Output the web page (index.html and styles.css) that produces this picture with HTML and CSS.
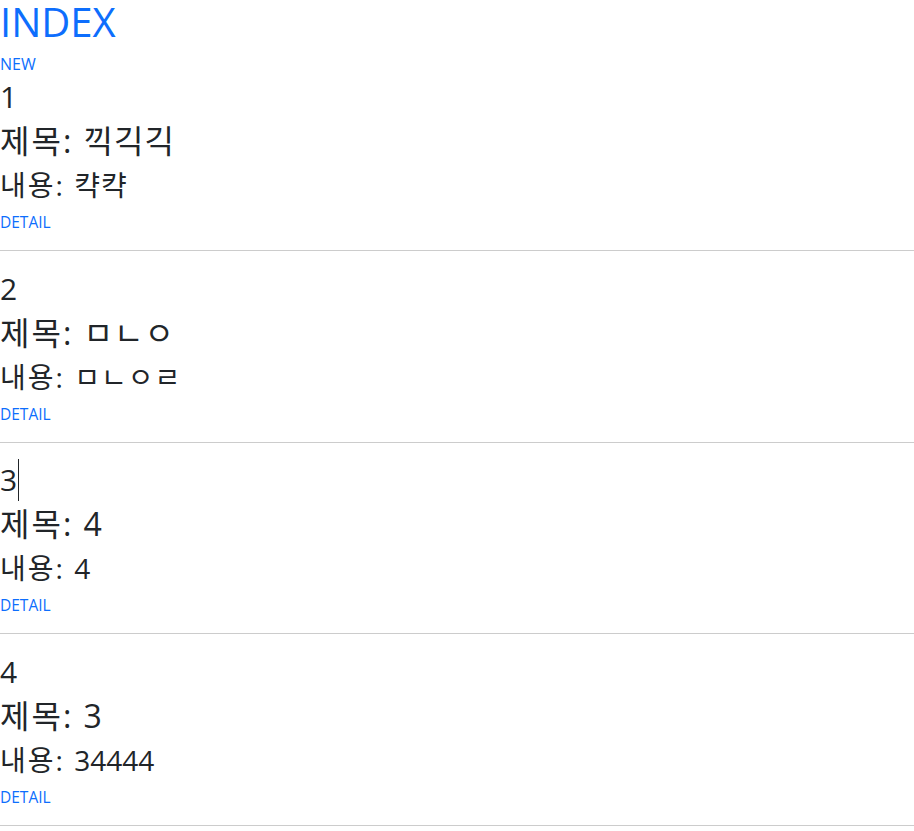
FILE: index.html
```html
<!DOCTYPE html>
<html lang="ko">
<head>
<meta charset="utf-8">
<title>INDEX</title>
<link rel="stylesheet" href="styles.css">
</head>
<body>
<h1 class="title"><a href="#">INDEX</a></h1>
<a class="small-link new-link" href="#">NEW</a>
<div class="list">
  <div class="item">
    <div class="num">1</div>
    <div class="subject"><span class="lbl">제목:</span> <span class="val">끽긱긱</span></div>
    <div class="content"><span class="lbl">내용:</span> <span class="val">캭캭</span></div>
    <a class="small-link" href="#">DETAIL</a>
  </div>
  <div class="item">
    <div class="num">2</div>
    <div class="subject"><span class="lbl">제목:</span> <span class="val">ㅁㄴㅇ</span></div>
    <div class="content"><span class="lbl">내용:</span> <span class="val">ㅁㄴㅇㄹ</span></div>
    <a class="small-link" href="#">DETAIL</a>
  </div>
  <div class="item">
    <div class="num">3<span class="caret"></span></div>
    <div class="subject"><span class="lbl">제목:</span> 4</div>
    <div class="content"><span class="lbl">내용:</span> 4</div>
    <a class="small-link" href="#">DETAIL</a>
  </div>
  <div class="item">
    <div class="num">4</div>
    <div class="subject"><span class="lbl">제목:</span> 3</div>
    <div class="content"><span class="lbl">내용:</span> 34444</div>
    <a class="small-link" href="#">DETAIL</a>
  </div>
</div>
</body>
</html>
```

FILE: styles.css
```css
html, body {
  margin: 0;
  padding: 0;
  background: #fff;
}
body {
  font-family: "Open Sans", "Noto Sans CJK KR", sans-serif;
  color: #212529;
}
a {
  color: #0d6efd;
  text-decoration: none;
}
.title {
  margin: 0;
  font-size: 40px;
  font-weight: 400;
  line-height: 44px;
}
.small-link {
  display: block;
  font-size: 15.5px;
  line-height: 20px;
}
.new-link {
  margin-top: 10px;
  font-size: 16px;
}
.item {
  display: flex;
  flex-direction: column;
  align-items: flex-start;
  border-bottom: 1px solid #cccccc;
  padding-bottom: 11px;
  margin-bottom: 17.67px;
}
.item:first-child {
  margin-top: 3px;
}
.num {
  font-size: 30px;
  line-height: 40px;
  height: 40px;
  display: flex;
  align-items: center;
}
.caret {
  display: inline-block;
  width: 1px;
  height: 42px;
  background: #212529;
  margin-left: 1px;
}
.subject {
  font-size: 32px;
  line-height: 48px;
}
.content {
  font-size: 28px;
  line-height: 40px;
}
.lbl {
  letter-spacing: 2px;
  margin-right: 2px;
}
.val {
  letter-spacing: 1px;
}
.item .small-link {
  line-height: 34px;
}
```
